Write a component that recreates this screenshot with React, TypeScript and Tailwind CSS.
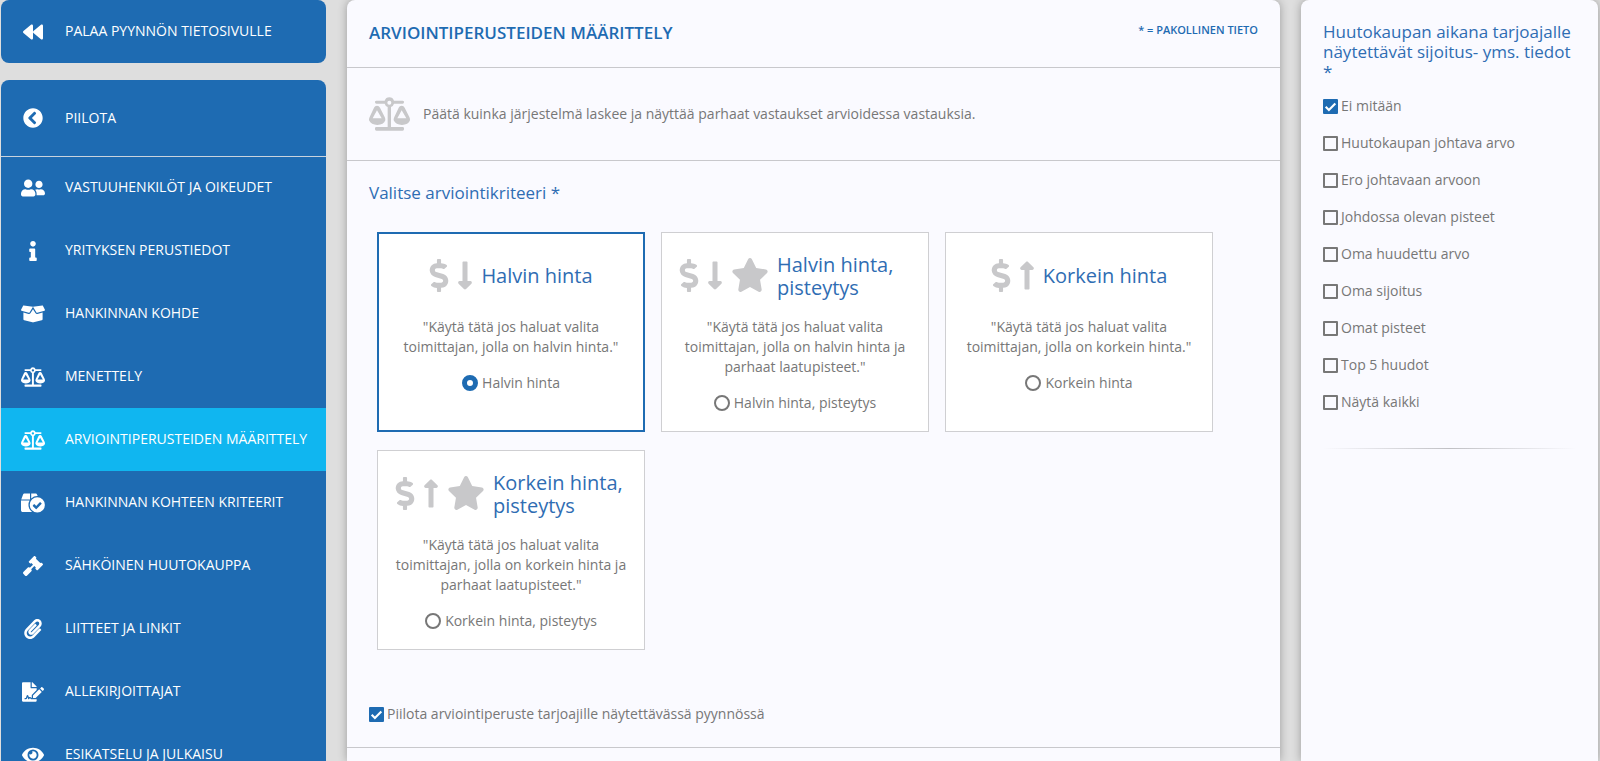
import React, { useState } from 'react';
import {
    FaBackward,
    FaBoxOpen,
    FaChevronCircleLeft,
    FaDollarSign,
    FaEye,
    FaFileSignature,
    FaGavel,
    FaInfo,
    FaLongArrowAltDown,
    FaLongArrowAltUp,
    FaPaperclip,
    FaStar,
    FaUserFriends,
} from 'react-icons/fa';

interface IconProps {
    className?: string;
}

const ScaleIcon: React.FC<IconProps> = ({ className }) => (
    <svg viewBox="0 0 123 100" className={className} fill="currentColor" aria-hidden="true">
        <path
            fillRule="evenodd"
            d="M61 0a15 15 0 0 1 14 10h26a4 4 0 0 1 4 5 4 4 0 0 1-4 4H75a15 15 0 0 1-9 10v60h35a4 4 0 0 1 4 5v2a4 4 0 0 1-4 4H22a4 4 0 0 1-4-4v-2a4 4 0 0 1 4-5h34V29a15 15 0 0 1-9-10H22a4 4 0 0 1-4-4 4 4 0 0 1 4-5h25A15 15 0 0 1 61 0zm0 10a6 6 0 1 0 0 12 6 6 0 0 0 0-12z"
        />
        <path
            fillRule="evenodd"
            d="M24 25c4 0 7 2 9 6l14 28c2 4 2 6 2 10-3 9-12 14-24 14S4 78 0 69c0-4 0-6 2-10l13-28c2-4 5-6 9-6zm0 14L11 63h27z"
        />
        <path
            fillRule="evenodd"
            d="M98 25c4 0 7 2 9 6l14 28c2 4 2 6 2 10-3 9-12 14-24 14s-21-5-25-14c0-4 0-6 2-10l13-28c2-4 5-6 9-6zm0 14L85 63h27z"
        />
    </svg>
);

const BoxCheckIcon: React.FC<IconProps> = ({ className }) => (
    <svg viewBox="0 0 640 512" className={className} fill="currentColor" aria-hidden="true">
        <path d="M240 0H98C77 0 59 13 53 33L6 160h234zM272 0h113c21 0 39 13 45 33l16 38A236 236 0 0 0 272 136zM0 192h229A236 236 0 0 0 294 496H48c-26 0-48-22-48-48z" />
        <path
            fillRule="evenodd"
            transform="translate(435 307) scale(1.2) translate(-448 -344)"
            d="M448 176a168 168 0 1 1 0 336 168 168 0 0 1 0-336zm92 133-21-22c-5-5-12-5-17 0l-79 79-33-34c-5-4-12-4-17 0l-22 22c-4 5-4 12 0 17l64 64c5 5 12 5 17 0l108-109c5-5 5-12 0-17z"
        />
    </svg>
);

const menuItems = [
    { label: 'VASTUUHENKILÖT JA OIKEUDET', icon: FaUserFriends, size: 'size-6' },
    { label: 'YRITYKSEN PERUSTIEDOT', icon: FaInfo, size: 'size-5' },
    { label: 'HANKINNAN KOHDE', icon: FaBoxOpen, size: 'size-6' },
    { label: 'MENETTELY', icon: ScaleIcon, size: 'size-6' },
    { label: 'ARVIOINTIPERUSTEIDEN MÄÄRITTELY', icon: ScaleIcon, size: 'size-6', active: true },
    { label: 'HANKINNAN KOHTEEN KRITEERIT', icon: BoxCheckIcon, size: 'size-6' },
    { label: 'SÄHKÖINEN HUUTOKAUPPA', icon: FaGavel, size: 'size-5' },
    { label: 'LIITTEET JA LINKIT', icon: FaPaperclip, size: 'size-5' },
    { label: 'ALLEKIRJOITTAJAT', icon: FaFileSignature, size: 'size-[22px]' },
    { label: 'ESIKATSELU JA JULKAISU', icon: FaEye, size: 'size-[22px]' },
];

const criteria = [
    {
        id: 'lowest',
        label: 'Halvin hinta',
        up: false,
        star: false,
        text: '"Käytä tätä jos haluat valita toimittajan, jolla on halvin hinta."',
    },
    {
        id: 'lowest-scored',
        label: 'Halvin hinta, pisteytys',
        up: false,
        star: true,
        text: '"Käytä tätä jos haluat valita toimittajan, jolla on halvin hinta ja parhaat laatupisteet."',
    },
    {
        id: 'highest',
        label: 'Korkein hinta',
        up: true,
        star: false,
        text: '"Käytä tätä jos haluat valita toimittajan, jolla on korkein hinta."',
    },
    {
        id: 'highest-scored',
        label: 'Korkein hinta, pisteytys',
        up: true,
        star: true,
        text: '"Käytä tätä jos haluat valita toimittajan, jolla on korkein hinta ja parhaat laatupisteet."',
    },
];

const visibleInfo = [
    'Ei mitään',
    'Huutokaupan johtava arvo',
    'Ero johtavaan arvoon',
    'Johdossa olevan pisteet',
    'Oma huudettu arvo',
    'Oma sijoitus',
    'Omat pisteet',
    'Top 5 huudot',
    'Näytä kaikki',
];

interface CheckboxProps {
    label: string;
    defaultChecked?: boolean;
}

const Checkbox: React.FC<CheckboxProps> = ({ label, defaultChecked }) => (
    <label className="flex items-center gap-[3px] leading-5">
        <span className="grid shrink-0 place-items-center">
            <input
                type="checkbox"
                defaultChecked={defaultChecked}
                className="peer col-start-1 row-start-1 size-[15px] appearance-none rounded-[1px] border-2 border-[#777] checked:border-[#1e6bb2] checked:bg-[#1e6bb2]"
            />
            <svg
                viewBox="0 0 14 14"
                className="pointer-events-none invisible col-start-1 row-start-1 size-[15px] peer-checked:visible"
                fill="none"
                stroke="white"
                strokeWidth="2"
                aria-hidden="true"
            >
                <path d="M2.5 7.2l3 3 6-6" />
            </svg>
        </span>
        {label}
    </label>
);

const Sidebar = () => (
    <aside className="w-[325px] shrink-0 text-sm text-white">
        <a href="#" className="flex h-[63px] items-center rounded-lg bg-[#1e6bb2]">
            <span className="flex w-16 justify-center">
                <FaBackward className="size-5" />
            </span>
            <span className="pb-0.5">PALAA PYYNNÖN TIETOSIVULLE</span>
        </a>
        <nav className="mt-[17px] rounded-t-lg bg-[#1e6bb2]">
            <button type="button" className="flex h-[76px] w-full items-center">
                <span className="flex w-16 justify-center">
                    <FaChevronCircleLeft className="size-5" />
                </span>
                PIILOTA
            </button>
            <ul>
                {menuItems.map(({ label, icon: Icon, size, active }) => (
                    <li key={label} className="flex h-[63px] border-[#c8d3de] first:border-t">
                        <a href="#" className={`flex flex-1 items-center ${active ? 'bg-[#10b6f0]' : ''}`}>
                            <span className="flex w-16 justify-center">
                                <Icon className={size} />
                            </span>
                            <span className="pb-0.5">{label}</span>
                        </a>
                    </li>
                ))}
            </ul>
        </nav>
    </aside>
);

const App = () => {
    const [selected, setSelected] = useState('lowest');

    return (
        <div className="flex h-screen gap-[21px] overflow-hidden bg-[#dedede] pr-0.5 pl-px font-['Open_Sans',sans-serif] text-sm text-[#777]">
            <Sidebar />

            <main className="min-w-0 flex-1 rounded-t-lg bg-[#fafaff] shadow-[0_0_10px_rgba(0,0,0,0.3)]">
                <header className="flex h-[68px] items-center justify-between border-b border-[#c8c8cc] px-[22px] text-[#1e6bb2]">
                    <h1 className="text-[17px] font-semibold">ARVIOINTIPERUSTEIDEN MÄÄRITTELY</h1>
                    <span className="pb-2 text-[11px] font-semibold">* = PAKOLLINEN TIETO</span>
                </header>

                <div className="flex h-[93px] items-center gap-[13px] border-b border-[#c8c8cc] px-[22px]">
                    <ScaleIcon className="h-[34px] w-[41px] text-[#c8c8ca]" />
                    <p>Päätä kuinka järjestelmä laskee ja näyttää parhaat vastaukset arvioidessa vastauksia.</p>
                </div>

                <section className="border-b border-[#c8c8cc] px-[22px] pt-5 pb-[23px]">
                    <h2 className="text-[17px] leading-6 text-[#2f6db3]">Valitse arviointikriteeri *</h2>
                    <div className="mt-[27px] grid grid-cols-[repeat(auto-fill,268px)] gap-x-4 gap-y-[18px] px-2">
                        {criteria.map(item => (
                            <div
                                key={item.id}
                                className={`flex h-[200px] flex-col items-center bg-white text-center ${
                                    selected === item.id
                                        ? 'border-2 border-[#1e6bb2] px-3 pt-[17px]'
                                        : 'border border-[#cfcfd2] px-[13px] pt-[18px]'
                                }`}
                            >
                                <div className="flex h-12 items-center text-[#c8c8ca]">
                                    <FaDollarSign className="h-[33px] w-5" />
                                    {item.up ? (
                                        <FaLongArrowAltUp className="ml-2 h-[33px] w-4" />
                                    ) : (
                                        <FaLongArrowAltDown className="ml-2 h-[33px] w-4" />
                                    )}
                                    {item.star && <FaStar className="ml-2 h-[34px] w-[38px]" />}
                                    <h3
                                        className={`ml-2 pt-0.5 text-left text-xl text-[#2f6db3] ${
                                            item.star ? 'w-[134px] leading-[23px]' : ''
                                        }`}
                                    >
                                        {item.label}
                                    </h3>
                                </div>
                                <p className="mt-[18px] leading-5">{item.text}</p>
                                <label className="mt-4 flex items-center gap-1 leading-5">
                                    <input
                                        type="radio"
                                        name="criterion"
                                        checked={selected === item.id}
                                        onChange={() => setSelected(item.id)}
                                        className="size-4 appearance-none rounded-full border-2 border-[#777] bg-white checked:border-[5px] checked:border-[#1e6bb2]"
                                    />
                                    {item.label}
                                </label>
                            </div>
                        ))}
                    </div>
                    <div className="mt-[54px]">
                        <Checkbox label="Piilota arviointiperuste tarjoajille näytettävässä pyynnössä" defaultChecked />
                    </div>
                </section>
            </main>

            <aside className="w-[297px] shrink-0 rounded-t-lg bg-[#fafaff] px-[22px] pt-[22px] shadow-[0_0_10px_rgba(0,0,0,0.3)]">
                <h2 className="text-[17px] leading-5 text-[#2f6db3]">
                    Huutokaupan aikana tarjoajalle näytettävät sijoitus- yms. tiedot *
                </h2>
                <ul className="mt-[14px] space-y-[17px]">
                    {visibleInfo.map((label, i) => (
                        <li key={label}>
                            <Checkbox label={label} defaultChecked={i === 0} />
                        </li>
                    ))}
                </ul>
                <div className="mt-9 h-px bg-linear-to-r from-transparent via-[#c0c0c4] to-transparent" />
            </aside>
        </div>
    );
};

export default App;
